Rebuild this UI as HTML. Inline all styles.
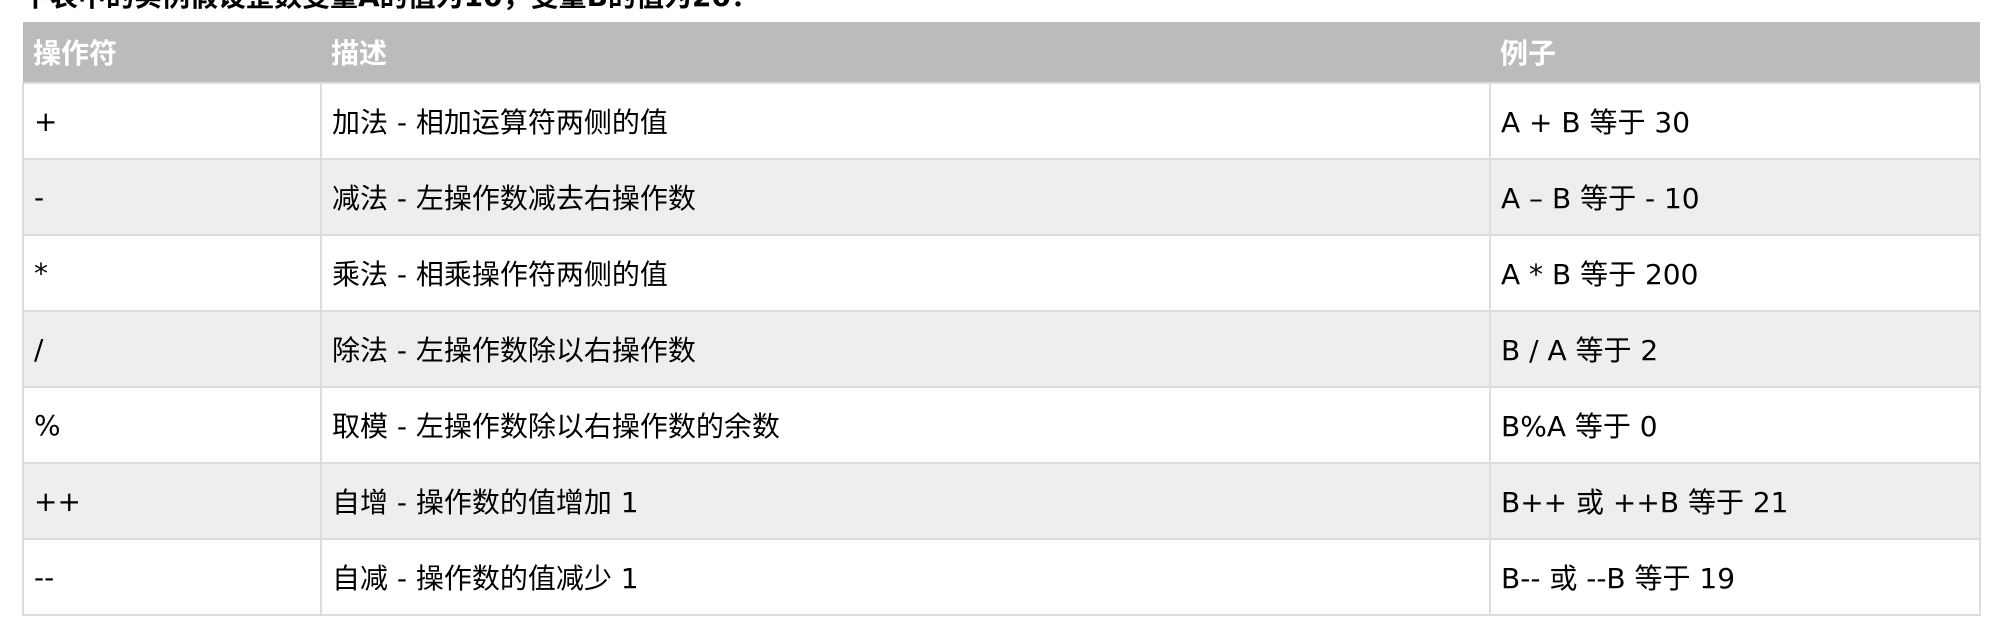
<!DOCTYPE html>
<html><head><meta charset="utf-8"><style>
body{margin:0;width:2002px;height:634px;overflow:hidden;background:#fff;font-family:"DejaVu Sans","Noto Sans CJK SC",sans-serif;position:relative}
.t{position:absolute;left:22px;top:-25px;font-size:28px;font-weight:bold;color:#000;white-space:nowrap}
table{position:absolute;left:22px;top:22px;width:1959px;border-collapse:collapse;font-size:28px;color:#000}
th{background:#bbb;color:#fff;text-align:left;height:61px;padding:0 10px;font-weight:bold;box-sizing:border-box}
td{height:76px;padding:0 10px;border:2px solid #ddd;box-sizing:border-box;white-space:nowrap}
tr.a td{background:#eee}
</style></head><body>
<div class="t">下表中的实例假设整数变量A的值为10，变量B的值为20：</div>
<table>
<colgroup><col style="width:298px"><col style="width:1169px"><col></colgroup>
<tr><th>操作符</th><th>描述</th><th>例子</th></tr>
<tr><td>+</td><td>加法 - 相加运算符两侧的值</td><td>A + B 等于 30</td></tr>
<tr class="a"><td>-</td><td>减法 - 左操作数减去右操作数</td><td>A – B 等于 - 10</td></tr>
<tr><td>*</td><td>乘法 - 相乘操作符两侧的值</td><td>A * B 等于 200</td></tr>
<tr class="a"><td>/</td><td>除法 - 左操作数除以右操作数</td><td>B / A 等于 2</td></tr>
<tr><td>%</td><td>取模 - 左操作数除以右操作数的余数</td><td>B%A 等于 0</td></tr>
<tr class="a"><td>++</td><td>自增 - 操作数的值增加 1</td><td>B++ 或 ++B 等于 21</td></tr>
<tr><td>--</td><td>自减 - 操作数的值减少 1</td><td>B-- 或 --B 等于 19</td></tr>
</table>
</body></html>
